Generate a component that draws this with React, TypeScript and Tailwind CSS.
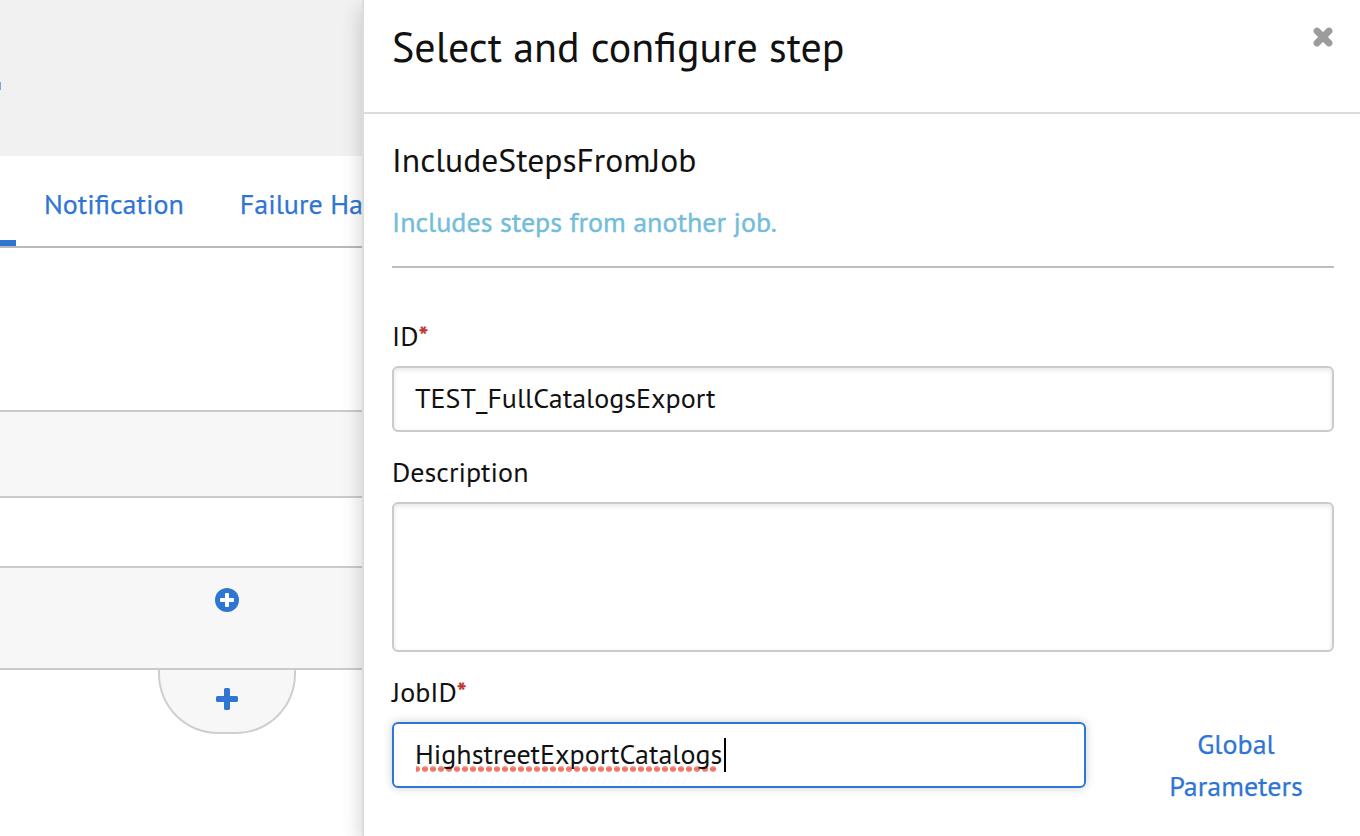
import type { ReactNode } from "react";

function Label({ children, required }: { children: ReactNode; required?: boolean }) {
  return (
    <label className="block h-[42px] leading-[42px]">
      {children}
      {required && <span className="text-[#b9332f] [-webkit-text-stroke:0.4px]">*</span>}
    </label>
  );
}

function SpellDots() {
  return (
    <svg className="absolute left-px top-[33px]" width="300" height="6" viewBox="0 0 300 6" aria-hidden="true">
      <defs>
        <linearGradient id="dot" x1="0" y1="0" x2="0" y2="1">
          <stop offset="0" stopColor="#f7a198" />
          <stop offset="0.5" stopColor="#f0685d" />
          <stop offset="1" stopColor="#f79488" />
        </linearGradient>
      </defs>
      {Array.from({ length: 38 }, (_, i) => (
        <circle key={i} cx={1 + i * 8} cy="3" r="3" fill="url(#dot)" />
      ))}
    </svg>
  );
}

function JobPage() {
  return (
    <main className="w-[362px] shrink-0 overflow-hidden">
      <header className="flex h-[156px] bg-[#f1f1f1] pt-[82px]">
        <span className="h-2 w-px bg-[#7ba6df]" />
      </header>
      <nav className="flex h-[92px] border-b-2 border-[#b9b9b9] leading-[42px] text-[#2f76d2] [-webkit-text-stroke:0.25px]">
        <span className="mr-7 w-4 shrink-0 border-b-[6px] border-[#2f76d2]" />
        <a className="mr-14 pt-[27px]">Notification</a>
        <a className="whitespace-nowrap pt-[27px]">Failure Ha</a>
      </nav>
      <section className="mt-[162px]">
        <div className="h-[88px] border-y-2 border-[#cbcbcb] bg-[#f7f7f7]" />
        <div className="mt-[68px] flex h-[104px] justify-center border-y-2 border-[#cbcbcb] bg-[#f7f7f7] pl-[92px] pt-5">
          <svg width="24" height="24" viewBox="0 0 24 24" aria-hidden="true">
            <circle cx="12" cy="12" r="12" fill="#2f76d2" />
            <path d="M11 5h2q1 0 1 1v4h4q1 0 1 1v2q0 1-1 1h-4v4q0 1-1 1h-2q-1 0-1-1v-4H6q-1 0-1-1v-2q0-1 1-1h4V6q0-1 1-1z" fill="#fff" />
          </svg>
        </div>
        <div className="ml-[158px] flex h-16 w-[138px] justify-center rounded-b-[60px] border-2 border-t-0 border-[#cfcfcf] bg-[#f7f7f7] pt-[18px]">
          <svg width="22" height="22" viewBox="0 0 22 22" aria-hidden="true">
            <path d="M9.5 0h3Q14 0 14 1.5V8h6.5Q22 8 22 9.5v3q0 1.500-1.500 1.500H14v6.500Q14 22 12.500 22h-3Q8 22 8 20.500V14H1.500Q0 14 0 12.500v-3Q0 8 1.500 8H8V1.500Q8 0 9.500 0z" fill="#2f76d2" />
          </svg>
        </div>
      </section>
    </main>
  );
}

function StepPanel() {
  return (
    <aside className="relative flex-1 border-l-2 border-[#dcdcdc] bg-white shadow-[0_8px_20px_rgba(0,0,0,0.2)]">
      <header className="flex h-[114px] items-start justify-between border-b-2 border-[#dcdcdc] pl-7 pr-[27px]">
        <h1 className="pt-[17px] text-[42px] leading-[60px]">Select and configure step</h1>
        <svg className="mt-[27px]" width="20" height="20" viewBox="0 0 20 20" aria-label="Close">
          <path d="M4 4l12 12M16 4L4 16" stroke="#9c9c9c" strokeWidth="6.8" strokeLinecap="round" />
        </svg>
      </header>
      <div className="pl-7 pr-[26px]">
        <div className="h-[154px] border-b-2 border-[#bdbdbd] pt-[21px]">
          <h2 className="text-[33.6px] leading-[50px]">IncludeStepsFromJob</h2>
          <p className="pt-4 leading-[42px] text-[#74bdda] [-webkit-text-stroke:0.4px]">Includes steps from another job.</p>
        </div>
        <div className="pt-[47px]">
          <Label required>ID</Label>
          <input
            readOnly
            value="TEST_FullCatalogsExport"
            className="mt-[9px] block h-[66px] w-full rounded-md border-2 border-[#cbcbcb] px-[21px] pb-[4px] shadow-[inset_0_2px_5px_rgba(0,0,0,0.1)] outline-none"
          />
        </div>
        <div className="pt-[19px]">
          <Label>Description</Label>
          <textarea readOnly className="mt-[9px] block h-[150px] w-full resize-none rounded-md border-2 border-[#cbcbcb] shadow-[inset_0_2px_5px_rgba(0,0,0,0.1)] outline-none" />
        </div>
        <div className="pt-[19px]">
          <Label required>JobID</Label>
          <div className="mt-[9px] flex">
            <div className="flex h-[66px] w-[694px] items-start rounded-md border-2 border-[#2f76d2] px-[21px] pt-[9px] shadow-[0_0_10px_rgba(0,0,0,0.2)]">
              <span className="relative leading-[42px]">
                <SpellDots />
                <span className="relative">HighstreetExportCatalogs</span>
              </span>
              <span className="ml-[1.700px] mt-[5px] h-[34px] w-[2px] bg-black" />
            </div>
            <a className="flex-1 pl-[52px] pt-px text-center leading-[42px] text-[#2f76d2] [-webkit-text-stroke:0.25px]">
              Global
              <br />
              Parameters
            </a>
          </div>
        </div>
      </div>
    </aside>
  );
}

export default function App() {
  return (
    <div className="flex h-[836px] w-[1360px] overflow-hidden bg-white font-['PT_Sans','Open_Sans',sans-serif] text-[28px] text-[#111111]">
      <JobPage />
      <StepPanel />
    </div>
  );
}
